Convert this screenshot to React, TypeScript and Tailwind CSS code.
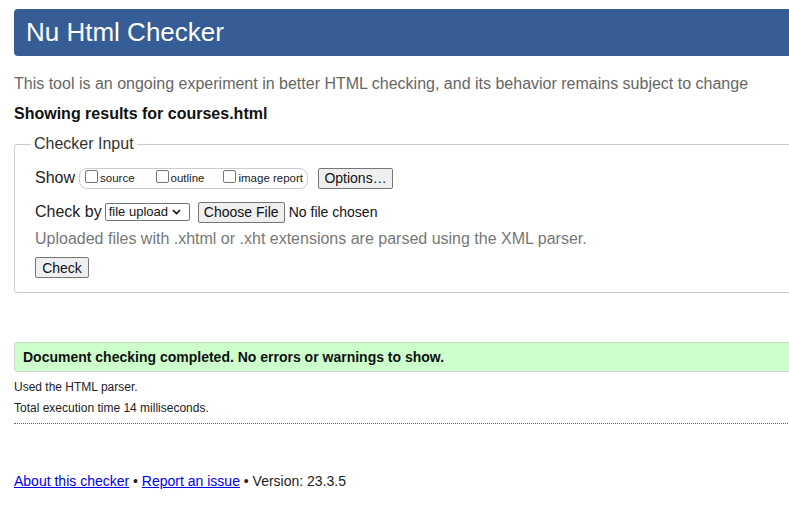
import React from 'react';

const Checkbox: React.FC<{ label: string; className?: string }> = ({ label, className = '' }) => (
  <span className={`flex items-center whitespace-nowrap ${className}`}>
    <span className="w-[13px] h-[13px] border border-[#767676] rounded-[2px] bg-white mr-[2px] mb-[3px]" />
    <span className="text-[11.5px] text-[#222] mt-[1px]">{label}</span>
  </span>
);

const Button: React.FC<{ children: React.ReactNode; className?: string }> = ({ children, className = '' }) => (
  <span
    className={`inline-flex items-center justify-center whitespace-nowrap border border-[#767676] rounded-[2px] bg-[#efefef] text-[#111] text-[14px] leading-none ${className}`}
  >
    {children}
  </span>
);

const App: React.FC = () => {
  return (
    <div className="w-[789px] h-[507px] overflow-hidden bg-white font-['Liberation_Sans',Arial,sans-serif]">
      <div className="w-[900px] pl-[14px] pt-[9px]">
        <header className="h-[47px] bg-[#365d95] rounded-[4px] flex items-center pl-[12px] pb-[2px]">
          <h1 className="text-white text-[26px] leading-none">Nu Html Checker</h1>
        </header>

        <p className="mt-[19px] text-[16px] text-[#666] leading-[18px]">
          This tool is an ongoing experiment in better HTML checking, and its behavior remains subject to change
        </p>
        <p className="mt-[12px] text-[16px] font-bold text-[#111] leading-[18px]">Showing results for courses.html</p>

        <fieldset className="mt-[12px] border border-[#ccc] rounded-[3px] h-[158px] pl-[20px]">
          <legend className="-ml-[4px] px-[3px] text-[16px] text-[#333] leading-[18px]">Checker Input</legend>

          <div className="flex items-center mt-[14px] h-[22px]">
            <span className="text-[16px] text-[#222] mr-[4px]">Show</span>
            <span className="flex items-center h-[21px] border border-[#ccc] rounded-[8px] pl-[5px] pr-[4px]">
              <Checkbox label="source" />
              <Checkbox label="outline" className="ml-[21px]" />
              <Checkbox label="image report" className="ml-[19px]" />
            </span>
            <Button className="ml-[10px] w-[75px] h-[21px]">Options…</Button>
          </div>

          <div className="flex items-center mt-[12px] h-[22px]">
            <span className="text-[16px] text-[#222] mr-[3px]">Check by</span>
            <span className="flex items-center h-[18px] w-[85px] border border-[#767676] rounded-[2px] px-[3px] text-[13px] text-[#111] whitespace-nowrap">
              <span>file upload</span>
              <svg className="ml-[4px]" width="9" height="6" viewBox="0 0 9 6">
                <path d="M1 1 L4.5 4.5 L8 1" fill="none" stroke="#111" strokeWidth="1.6" />
              </svg>
            </span>
            <Button className="ml-[8px] w-[87px] h-[21px]">Choose File</Button>
            <span className="ml-[4px] text-[14px] text-[#111]">No file chosen</span>
          </div>

          <p className="mt-[7px] text-[16px] text-[#777] leading-[18px]">
            Uploaded files with .xhtml or .xht extensions are parsed using the XML parser.
          </p>

          <Button className="mt-[9px] w-[54px] h-[21px]">Check</Button>
        </fieldset>

        <div className="mt-[49px] h-[30px] bg-[#ccffcc] border border-[#c6dcc6] rounded-[3px] flex items-center pl-[8px]">
          <span className="text-[14px] font-bold text-[#111]">Document checking completed. No errors or warnings to show.</span>
        </div>

        <p className="mt-[8px] text-[12px] text-[#222] leading-[14px]">Used the HTML parser.</p>
        <p className="mt-[7px] text-[12px] text-[#222] leading-[14px]">Total execution time 14 milliseconds.</p>
        <div className="mt-[8px] border-t border-dotted border-[#666]" />

        <p className="mt-[49px] text-[14px] text-[#222] leading-[16px]">
          <a className="text-[#0000ee] underline">About this checker</a> •{' '}
          <a className="text-[#0000ee] underline">Report an issue</a> • Version: 23.3.5
        </p>
      </div>
    </div>
  );
};

export default App;
